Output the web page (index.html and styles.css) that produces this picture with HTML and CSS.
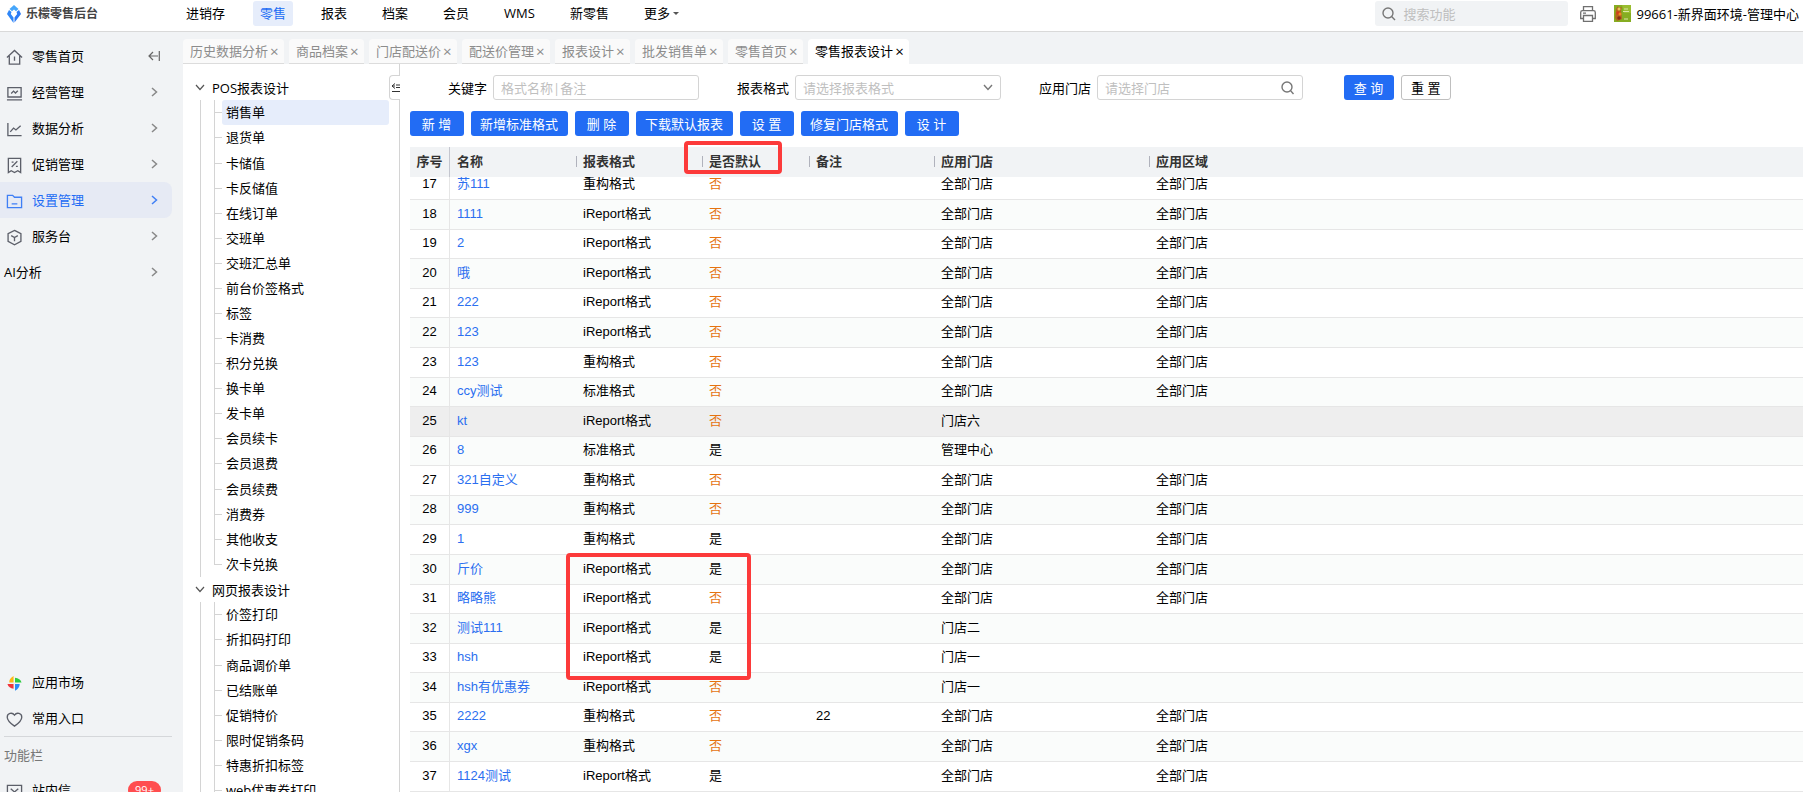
FILE: index.html
```html
<!doctype html>
<html lang="zh-CN">
    <head>
        <meta charset="UTF-8" />
        <meta name="viewport" content="width=device-width, initial-scale=1.0" />
        <title>零售报表设计</title>
        <link rel="stylesheet" href="styles.css">
    </head>
    <body>
        <header class="topbar">
            <div class="brand">
                <svg width="14" height="18" viewBox="0 0 14 18">
                    <path d="M7 0 L11.500 4 L9 6.300 L7 4.600 L5 6.300 L2.500 4Z" fill="#45a6fb" />
                    <path d="M2 5 L4.500 7 L3.800 9 L6.500 12.500 L6.500 18 L0 9Z" fill="#2f86f7" />
                    <path d="M12 5 L14 9 L7.500 17.500 L7.500 12.500 L10.200 9 L9.500 7Z" fill="#2b7af5" />
                </svg>
                <span>乐檬零售后台</span>
            </div>
            <nav class="topnav">
                <a href="#">进销存</a>
                <a href="#" class="active">零售</a>
                <a href="#">报表</a>
                <a href="#">档案</a>
                <a href="#">会员</a>
                <a href="#">WMS</a>
                <a href="#">新零售</a>
                <a href="#" class="more">更多<i class="caret"></i></a>
            </nav>
            <div class="topsearch">
                <svg width="14" height="14" viewBox="0 0 14 14" fill="none" stroke="#777" stroke-width="1.400">
                    <circle cx="6" cy="6" r="5" />
                    <path d="M9.600 9.600 L13 13" />
                </svg>
                <input type="text" placeholder="搜索功能" aria-label="搜索功能" />
            </div>
            <button class="print" type="button" aria-label="打印">
                <svg width="16" height="16" viewBox="0 0 16 16" fill="none" stroke="#707070" stroke-width="1.300">
                    <path d="M3.500 4.500 V0.700 H12.500 V4.500" />
                    <path d="M3 12.500 H0.700 V6.500 Q0.700 4.700 2.500 4.700 H13.500 Q15.300 4.700 15.300 6.500 V12.500 H13" />
                    <path d="M3.500 9.500 H12.500 V15.300 H3.500Z M3 7.200 H6" />
                </svg>
            </button>
            <div class="user">
                <svg width="17" height="17" viewBox="0 0 17 17">
                    <rect width="17" height="17" fill="#86ad22" />
                    <path d="M8 0 H17 V8 H10Z" fill="#9abd30" />
                    <path d="M2 4 L4 1 L5 3 L8 2 L7 5 L8 14 L3 16 L1 13Z" fill="#b5651f" />
                    <circle cx="5" cy="4" r="1.500" fill="#e9c15a" />
                    <circle cx="4" cy="8" r="1.700" fill="#d63a1e" />
                    <circle cx="6" cy="9" r="1.500" fill="#f08a24" />
                    <circle cx="5" cy="13" r="1.800" fill="#8c2f16" />
                    <path d="M9 6.500 H15 M10 4 H14 M10 14 H14" stroke="#dbe7a6" />
                </svg>
                <span>99661-新界面环境-管理中心</span>
            </div>
        </header>

        <div class="layout">
            <aside class="sidebar">
                <nav class="menu">
                    <a href="#" class="item">
                        <svg class="ico" viewBox="0 0 18 18"><path d="M1 9 L9 1.500 L17 9 M3.500 7.500 V16 H14.500 V7.500 M9 8 V12.500" /></svg>
                        <span>零售首页</span>
                        <svg class="fold" viewBox="0 0 12 10"><path d="M11.300 0 V10 M10 5 H1 M5 1 L1 5 L5 9" /></svg>
                    </a>
                    <a href="#" class="item">
                        <svg class="ico" viewBox="0 0 18 18"><path d="M2 2.700 H16 V12.700 H2Z M1 15.700 H17 M5.500 9 L8 6.500 L10 8.500 L12.500 6" /></svg>
                        <span>经营管理</span>
                        <svg class="arrow" viewBox="0 0 7 10"><path d="M1 1 L5.500 5 L1 9" /></svg>
                    </a>
                    <a href="#" class="item">
                        <svg class="ico" viewBox="0 0 18 18"><path d="M2 2 V15.500 H16.500 M4.500 11.500 L8 7.500 L10.500 9.500 L15.500 5" /></svg>
                        <span>数据分析</span>
                        <svg class="arrow" viewBox="0 0 7 10"><path d="M1 1 L5.500 5 L1 9" /></svg>
                    </a>
                    <a href="#" class="item">
                        <svg class="ico" viewBox="0 0 18 18"><path d="M2.500 1.500 H15.500 V16.500 L12.500 14.500 L9 16.500 L5.500 14.500 L2.500 16.500Z M6 10.500 L12 4.500 M6 5.500 H8 M10.500 10 H12.500" /></svg>
                        <span>促销管理</span>
                        <svg class="arrow" viewBox="0 0 7 10"><path d="M1 1 L5.500 5 L1 9" /></svg>
                    </a>
                    <a href="#" class="item active">
                        <svg class="ico" viewBox="0 0 18 18"><path d="M1.500 2.500 H7 L9 4.500 H16.500 V15.500 H1.500Z M6 11.500 H12" /></svg>
                        <span>设置管理</span>
                        <svg class="arrow" viewBox="0 0 7 10"><path d="M1 1 L5.500 5 L1 9" /></svg>
                    </a>
                    <a href="#" class="item">
                        <svg class="ico" viewBox="0 0 18 18"><path d="M9 1.500 L15.800 5 V13 L9 16.700 L2.200 13 V5Z M5.500 7 L9 9 L12.500 7 M9 9 V13" /></svg>
                        <span>服务台</span>
                        <svg class="arrow" viewBox="0 0 7 10"><path d="M1 1 L5.500 5 L1 9" /></svg>
                    </a>
                    <a href="#" class="item plain">
                        <span>AI分析</span>
                        <svg class="arrow" viewBox="0 0 7 10"><path d="M1 1 L5.500 5 L1 9" /></svg>
                    </a>
                </nav>
                <div class="side-bottom">
                    <a href="#" class="item">
                        <svg class="market" viewBox="0 0 18 18">
                            <path d="M8 8 H3.500 Q3 4 8 1Z" fill="#fdb813" />
                            <path d="M9.500 8 V3 Q15 3.500 16.500 8Z" fill="#2ecc40" />
                            <path d="M8 9.500 V14.500 Q3 14 1.500 9.500Z" fill="#f0353c" />
                            <path d="M9.500 9.500 H14.500 Q14.500 14 9.500 16.800Z" fill="#2b8cf7" />
                        </svg>
                        <span>应用市场</span>
                    </a>
                    <a href="#" class="item">
                        <svg class="ico" viewBox="0 0 18 18"><path d="M9 16 C4 12.500 1.300 9.700 1.300 6.500 C1.300 2.500 6.500 0.800 9 4.300 C11.500 0.800 16.700 2.500 16.700 6.500 C16.700 9.700 14 12.500 9 16Z" /></svg>
                        <span>常用入口</span>
                    </a>
                    <p class="group">功能栏</p>
                    <a href="#" class="item">
                        <svg class="ico" viewBox="0 0 18 18"><path d="M1.500 2.500 H16.500 V15.500 H1.500Z M5 6 L9 9.500 L13 6" /></svg>
                        <span>站内信</span>
                        <b class="badge">99+</b>
                    </a>
                </div>
            </aside>

            <main class="main">
                <div class="tabs">
                    <a href="#" class="tab">历史数据分析<i>×</i></a>
                    <a href="#" class="tab">商品档案<i>×</i></a>
                    <a href="#" class="tab">门店配送价<i>×</i></a>
                    <a href="#" class="tab">配送价管理<i>×</i></a>
                    <a href="#" class="tab">报表设计<i>×</i></a>
                    <a href="#" class="tab">批发销售单<i>×</i></a>
                    <a href="#" class="tab">零售首页<i>×</i></a>
                    <a href="#" class="tab current">零售报表设计<i>×</i></a>
                </div>

                <div class="content">
                    <section class="tree">
                        <button class="tree-fold" type="button" aria-label="收起">
                            <svg width="9" height="10" viewBox="0 0 9 10"><path d="M4 0.500 L1 3 L4 5.500 M1 3 H4 M5 2 H9 M5 4.500 H9 M1 8.500 H9" /></svg>
                        </button>
                        <h2><svg viewBox="0 0 10 7"><path d="M1 1 L5 5.500 L9 1" /></svg>POS报表设计</h2>
                        <ul>
                            <li class="selected"><a href="#">销售单</a></li>
                            <li><a href="#">退货单</a></li>
                            <li><a href="#">卡储值</a></li>
                            <li><a href="#">卡反储值</a></li>
                            <li><a href="#">在线订单</a></li>
                            <li><a href="#">交班单</a></li>
                            <li><a href="#">交班汇总单</a></li>
                            <li><a href="#">前台价签格式</a></li>
                            <li><a href="#">标签</a></li>
                            <li><a href="#">卡消费</a></li>
                            <li><a href="#">积分兑换</a></li>
                            <li><a href="#">换卡单</a></li>
                            <li><a href="#">发卡单</a></li>
                            <li><a href="#">会员续卡</a></li>
                            <li><a href="#">会员退费</a></li>
                            <li><a href="#">会员续费</a></li>
                            <li><a href="#">消费券</a></li>
                            <li><a href="#">其他收支</a></li>
                            <li><a href="#">次卡兑换</a></li>
                        </ul>
                        <h2><svg viewBox="0 0 10 7"><path d="M1 1 L5 5.500 L9 1" /></svg>网页报表设计</h2>
                        <ul>
                            <li><a href="#">价签打印</a></li>
                            <li><a href="#">折扣码打印</a></li>
                            <li><a href="#">商品调价单</a></li>
                            <li><a href="#">已结账单</a></li>
                            <li><a href="#">促销特价</a></li>
                            <li><a href="#">限时促销条码</a></li>
                            <li><a href="#">特惠折扣标签</a></li>
                            <li><a href="#">web优惠券打印</a></li>
                            <li></li>
                        </ul>
                    </section>

                    <section class="panel">
                        <form class="filters">
                            <label for="keyword">关键字</label>
                            <input id="keyword" type="text" placeholder="格式名称|备注" />
                            <label for="format">报表格式</label>
                            <div class="control">
                                <select id="format">
                                    <option>请选择报表格式</option>
                                    <option>重构格式</option>
                                    <option>iReport格式</option>
                                    <option>标准格式</option>
                                </select>
                                <svg width="10" height="7" viewBox="0 0 10 7"><path d="M1 1 L5 5.500 L9 1" /></svg>
                            </div>
                            <label for="store">应用门店</label>
                            <div class="control">
                                <input id="store" type="text" placeholder="请选择门店" />
                                <svg width="14" height="14" viewBox="0 0 14 14"><circle cx="6" cy="6" r="5" /><path d="M9.600 9.600 L12.500 13" /></svg>
                            </div>
                            <button type="button" class="btn query">查 询</button>
                            <button type="reset" class="btn reset">重 置</button>
                        </form>

                        <div class="actions">
                            <button type="button" class="btn">新 增</button>
                            <button type="button" class="btn">新增标准格式</button>
                            <button type="button" class="btn">删 除</button>
                            <button type="button" class="btn">下载默认报表</button>
                            <button type="button" class="btn">设 置</button>
                            <button type="button" class="btn">修复门店格式</button>
                            <button type="button" class="btn">设 计</button>
                        </div>

                        <div class="grid">
                            <table class="grid-head">
                                <colgroup><col class="c-no"><col class="c-name"><col class="c-format"><col class="c-default"><col class="c-note"><col class="c-store"><col></colgroup>
                                <thead>
                                    <tr>
                                        <th>序号</th>
                                        <th>名称</th>
                                        <th>报表格式</th>
                                        <th>是否默认</th>
                                        <th>备注</th>
                                        <th>应用门店</th>
                                        <th>应用区域</th>
                                    </tr>
                                </thead>
                            </table>
                            <div class="grid-scroll">
                                <table class="grid-body">
                                    <colgroup><col class="c-no"><col class="c-name"><col class="c-format"><col class="c-default"><col class="c-note"><col class="c-store"><col></colgroup>
                                    <tbody>
                                        <tr><td>17</td><td><a href="#">苏111</a></td><td>重构格式</td><td class="no">否</td><td></td><td>全部门店</td><td>全部门店</td></tr>
                                        <tr><td>18</td><td><a href="#">1111</a></td><td>iReport格式</td><td class="no">否</td><td></td><td>全部门店</td><td>全部门店</td></tr>
                                        <tr><td>19</td><td><a href="#">2</a></td><td>iReport格式</td><td class="no">否</td><td></td><td>全部门店</td><td>全部门店</td></tr>
                                        <tr><td>20</td><td><a href="#">哦</a></td><td>iReport格式</td><td class="no">否</td><td></td><td>全部门店</td><td>全部门店</td></tr>
                                        <tr><td>21</td><td><a href="#">222</a></td><td>iReport格式</td><td class="no">否</td><td></td><td>全部门店</td><td>全部门店</td></tr>
                                        <tr><td>22</td><td><a href="#">123</a></td><td>iReport格式</td><td class="no">否</td><td></td><td>全部门店</td><td>全部门店</td></tr>
                                        <tr><td>23</td><td><a href="#">123</a></td><td>重构格式</td><td class="no">否</td><td></td><td>全部门店</td><td>全部门店</td></tr>
                                        <tr><td>24</td><td><a href="#">ccy测试</a></td><td>标准格式</td><td class="no">否</td><td></td><td>全部门店</td><td>全部门店</td></tr>
                                        <tr class="hover"><td>25</td><td><a href="#">kt</a></td><td>iReport格式</td><td class="no">否</td><td></td><td>门店六</td><td></td></tr>
                                        <tr><td>26</td><td><a href="#">8</a></td><td>标准格式</td><td>是</td><td></td><td>管理中心</td><td></td></tr>
                                        <tr><td>27</td><td><a href="#">321自定义</a></td><td>重构格式</td><td class="no">否</td><td></td><td>全部门店</td><td>全部门店</td></tr>
                                        <tr><td>28</td><td><a href="#">999</a></td><td>重构格式</td><td class="no">否</td><td></td><td>全部门店</td><td>全部门店</td></tr>
                                        <tr><td>29</td><td><a href="#">1</a></td><td>重构格式</td><td>是</td><td></td><td>全部门店</td><td>全部门店</td></tr>
                                        <tr><td>30</td><td><a href="#">斤价</a></td><td>iReport格式</td><td>是</td><td></td><td>全部门店</td><td>全部门店</td></tr>
                                        <tr><td>31</td><td><a href="#">略略熊</a></td><td>iReport格式</td><td class="no">否</td><td></td><td>全部门店</td><td>全部门店</td></tr>
                                        <tr><td>32</td><td><a href="#">测试111</a></td><td>iReport格式</td><td>是</td><td></td><td>门店二</td><td></td></tr>
                                        <tr><td>33</td><td><a href="#">hsh</a></td><td>iReport格式</td><td>是</td><td></td><td>门店一</td><td></td></tr>
                                        <tr><td>34</td><td><a href="#">hsh有优惠券</a></td><td>iReport格式</td><td class="no">否</td><td></td><td>门店一</td><td></td></tr>
                                        <tr><td>35</td><td><a href="#">2222</a></td><td>重构格式</td><td class="no">否</td><td>22</td><td>全部门店</td><td>全部门店</td></tr>
                                        <tr><td>36</td><td><a href="#">xgx</a></td><td>重构格式</td><td class="no">否</td><td></td><td>全部门店</td><td>全部门店</td></tr>
                                        <tr><td>37</td><td><a href="#">1124测试</a></td><td>iReport格式</td><td>是</td><td></td><td>全部门店</td><td>全部门店</td></tr>
                                    </tbody>
                                </table>
                            </div>
                            <div class="mark mark-head"></div>
                            <div class="mark mark-rows"></div>
                        </div>
                    </section>
                </div>
            </main>
        </div>
    </body>
</html>
```
FILE: styles.css
```css
* {
    margin: 0;
    padding: 0;
    box-sizing: border-box;
}
body {
    height: 100vh;
    overflow: hidden;
    display: flex;
    flex-direction: column;
    font-family: "Open Sans", "Noto Sans CJK SC", sans-serif;
    font-size: 13px;
    line-height: 18px;
    color: #000;
    background: #f1f3f5;
}
a {
    color: inherit;
    text-decoration: none;
}
i {
    font-style: normal;
}
input,
select,
button {
    font: inherit;
    color: inherit;
}
svg {
    flex: none;
    fill: none;
}

/* top bar */
.topbar {
    flex: none;
    height: 32px;
    display: flex;
    align-items: center;
    padding: 0 4px 4px 7px;
    background: #fff;
    border-bottom: 1px solid #d9d9d9;
}
.brand {
    width: 172px;
    display: flex;
    align-items: center;
    gap: 5px;
    font-weight: 700;
    font-size: 12px;
    color: #444;
}
.topnav {
    flex: 1;
    display: flex;
    gap: 21px;
}
.topnav a {
    height: 25px;
    line-height: 25px;
    padding: 0 7px;
    border-radius: 3px;
}
.topnav .active {
    color: #226cf4;
    background: #e6edfb;
}
.more {
    display: flex;
    align-items: center;
    gap: 3px;
}
.caret {
    border: 3px solid transparent;
    border-top-color: #555;
    border-bottom: 0;
}
.topsearch {
    width: 193px;
    height: 25px;
    display: flex;
    align-items: center;
    gap: 7px;
    padding-left: 7px;
    background: #f1f3f5;
    border-radius: 3px;
}
.topsearch input {
    width: 150px;
    border: 0;
    outline: 0;
    background: none;
}
::placeholder {
    color: #bfbfbf;
    opacity: 1;
}
.print {
    display: flex;
    margin: 0 18px 0 12px;
    border: 0;
    background: none;
}
.user {
    display: flex;
    align-items: center;
    gap: 5px;
    white-space: nowrap;
}

/* left menu */
.layout {
    flex: 1;
    min-height: 0;
    display: flex;
}
.sidebar {
    flex: none;
    width: 183px;
    display: flex;
    flex-direction: column;
    overflow: hidden;
}
.menu {
    flex: 1;
    padding-top: 6px;
}
.item {
    height: 36px;
    margin-right: 11px;
    padding: 0 14px 0 6px;
    display: flex;
    align-items: center;
    gap: 9px;
    border-radius: 0 8px 8px 0;
}
.item.plain {
    padding-left: 4px;
}
.item span {
    flex: 1;
}
.item.active {
    color: #226cf4;
    background: #e6eaf4;
}
.ico,
.market {
    width: 17px;
    height: 17px;
    margin-top: 3px;
}
.ico {
    stroke: #5c5f69;
    stroke-width: 1.4;
}
.arrow {
    width: 7px;
    height: 10px;
    stroke: #888;
    stroke-width: 1.5;
}
.active .ico,
.active .arrow {
    stroke: #3f7ff5;
}
.fold {
    width: 12px;
    height: 10px;
    margin-right: -2px;
    stroke: #666;
    stroke-width: 1.2;
}
.side-bottom {
    flex: none;
    height: 128px;
}
.group {
    margin: 0 11px 0 4px;
    height: 36px;
    line-height: 36px;
    color: #777;
    border-top: 1px solid #d5d7da;
}
.badge {
    margin-right: -3px;
    width: 33px;
    height: 18px;
    border-radius: 9px;
    background: #ff4d4f;
    color: #fff;
    font-size: 11px;
    font-weight: 400;
    line-height: 18px;
    text-align: center;
}

/* page tabs */
.main {
    flex: 1;
    min-width: 0;
    display: flex;
    flex-direction: column;
}
.tabs {
    display: flex;
    gap: 5px;
    padding-top: 7px;
}
.tab {
    height: 25px;
    padding: 0 6px 0 7px;
    display: flex;
    align-items: center;
    gap: 2px;
    color: #8c8c8c;
    background: #fafafa;
    border-bottom: 1px solid #dcdcdc;
    border-radius: 4px 4px 0 0;
}
.tab i {
    width: 8px;
    font-size: 15px;
    text-align: center;
}
.tab.current {
    color: #000;
    background: #fff;
    border-color: #fff;
}
.content {
    flex: 1;
    min-height: 0;
    display: flex;
    background: #fff;
    overflow: hidden;
}

/* report tree */
.tree {
    position: relative;
    flex: none;
    width: 217px;
    padding-top: 11px;
    border-right: 1px solid #d4d4d4;
}
.tree h2 {
    height: 25px;
    padding-left: 12px;
    display: flex;
    align-items: center;
    gap: 7px;
    font-size: 13px;
    font-weight: 400;
}
.tree h2 svg {
    width: 10px;
    height: 7px;
    stroke: #555;
    stroke-width: 1.2;
}
.tree ul {
    list-style: none;
    margin: 0 10px 0 17px;
    padding-left: 13px;
    border-left: 1px solid #d4d4d4;
}
.tree li {
    height: 25px;
    display: flex;
    background: linear-gradient(#d4d4d4, #d4d4d4) 0 0 / 1px 100% no-repeat;
}
.tree li:nth-child(13n + 2) {
    height: 26px;
}
.tree li:last-child {
    background-size: 1px 12px;
}
.tree li::before {
    content: "";
    width: 8px;
    height: 12px;
    border-bottom: 1px solid #d4d4d4;
}
.tree li a {
    flex: 1;
    padding-left: 4px;
    line-height: 25px;
    border-radius: 3px;
}
.tree .selected a {
    background: #e6edfb;
}
.tree-fold {
    position: absolute;
    top: 11px;
    right: -1px;
    width: 11px;
    height: 25px;
    display: flex;
    align-items: center;
    justify-content: flex-end;
    border: 1px solid #d4d4d4;
    border-right: 0;
    border-radius: 4px 0 0 4px;
    background: #fff;
}
.tree-fold svg {
    stroke: #333;
}

/* filters and buttons */
.panel {
    flex: 1;
    min-width: 0;
    display: flex;
    flex-direction: column;
    gap: 11px;
    padding: 11px 0 0 10px;
}
.filters {
    display: flex;
    align-items: center;
}
.filters label {
    width: 77px;
    margin-right: 6px;
    text-align: right;
}
.filters input,
.filters select {
    width: 206px;
    height: 25px;
    padding: 0 7px;
    border: 1px solid #d4d4d4;
    border-radius: 3px;
    background: #fff;
    outline: 0;
}
.filters select {
    appearance: none;
    color: #bfbfbf;
}
.filters input,
.control {
    margin-right: 13px;
}
.control {
    position: relative;
    display: flex;
}
.control input {
    margin-right: 0;
}
.control svg {
    position: absolute;
    right: 8px;
    top: 0;
    bottom: 0;
    margin: auto;
    stroke: #777;
    stroke-width: 1.4;
    pointer-events: none;
}
.btn {
    min-width: 54px;
    height: 25px;
    padding: 0 10px 0 9px;
    border: 0;
    border-radius: 3px;
    background: #226cf4;
    color: #fff;
    white-space: nowrap;
}
.query {
    min-width: 50px;
    margin: 0 7px 0 28px;
}
.reset {
    min-width: 50px;
    color: #000;
    background: #fff;
    border: 1px solid #bfbfbf;
}
.actions {
    display: flex;
    gap: 7px;
}

/* data grid */
.grid {
    position: relative;
    flex: 1;
    min-height: 0;
    display: flex;
    flex-direction: column;
    font-family: "Liberation Sans", "Noto Sans CJK SC", sans-serif;
}
.grid table {
    width: 100%;
    table-layout: fixed;
    border-collapse: separate;
    border-spacing: 0;
}
.c-no {
    width: 40px;
}
.c-name,
.c-format {
    width: 126px;
}
.c-default {
    width: 107px;
}
.c-note {
    width: 125px;
}
.c-store {
    width: 215px;
}
.grid-head th {
    height: 30px;
    padding-left: 7px;
    text-align: left;
    color: #333;
    background: #f1f3f5;
}
.grid-head th:first-child {
    padding: 0;
    text-align: center;
    border-right: 1px solid #c4c6cf;
}
.grid-head th:nth-child(n + 3) {
    background: linear-gradient(#b0b2bc, #b0b2bc) 0 9px / 1px 11px no-repeat #f1f3f5;
}
.grid-scroll {
    flex: 1;
    min-height: 0;
    overflow: hidden;
}
/* list is scrolled part way into its first row */
.grid-body {
    margin-top: -7px;
}
.grid-body td {
    height: 30px;
    padding: 0 0 2px 7px;
    border-bottom: 1px solid #e6e6e6;
    white-space: nowrap;
}
.grid-body tr:nth-child(7n + 3) td,
.grid-body tr:nth-child(7n + 5) td,
.grid-body tr:nth-child(7n + 8) td {
    height: 29px;
}
.grid-body tr:nth-child(even) {
    background: #fafcfb;
}
.grid-body tr.hover {
    background: #eee;
}
.grid-body td:first-child {
    padding-left: 0;
    text-align: center;
    border-right: 1px solid #e6e6e6;
}
.grid-body a {
    color: #2b6ff0;
}
.grid-body .no {
    color: #e5730f;
}

/* red call-outs over the grid */
.mark {
    position: absolute;
    border: 4px solid #fc3a3a;
    border-radius: 4px;
    pointer-events: none;
}
.mark-head {
    left: 274px;
    top: -6px;
    width: 98px;
    height: 33px;
}
.mark-rows {
    left: 156px;
    top: 406px;
    width: 185px;
    height: 127px;
}
```
